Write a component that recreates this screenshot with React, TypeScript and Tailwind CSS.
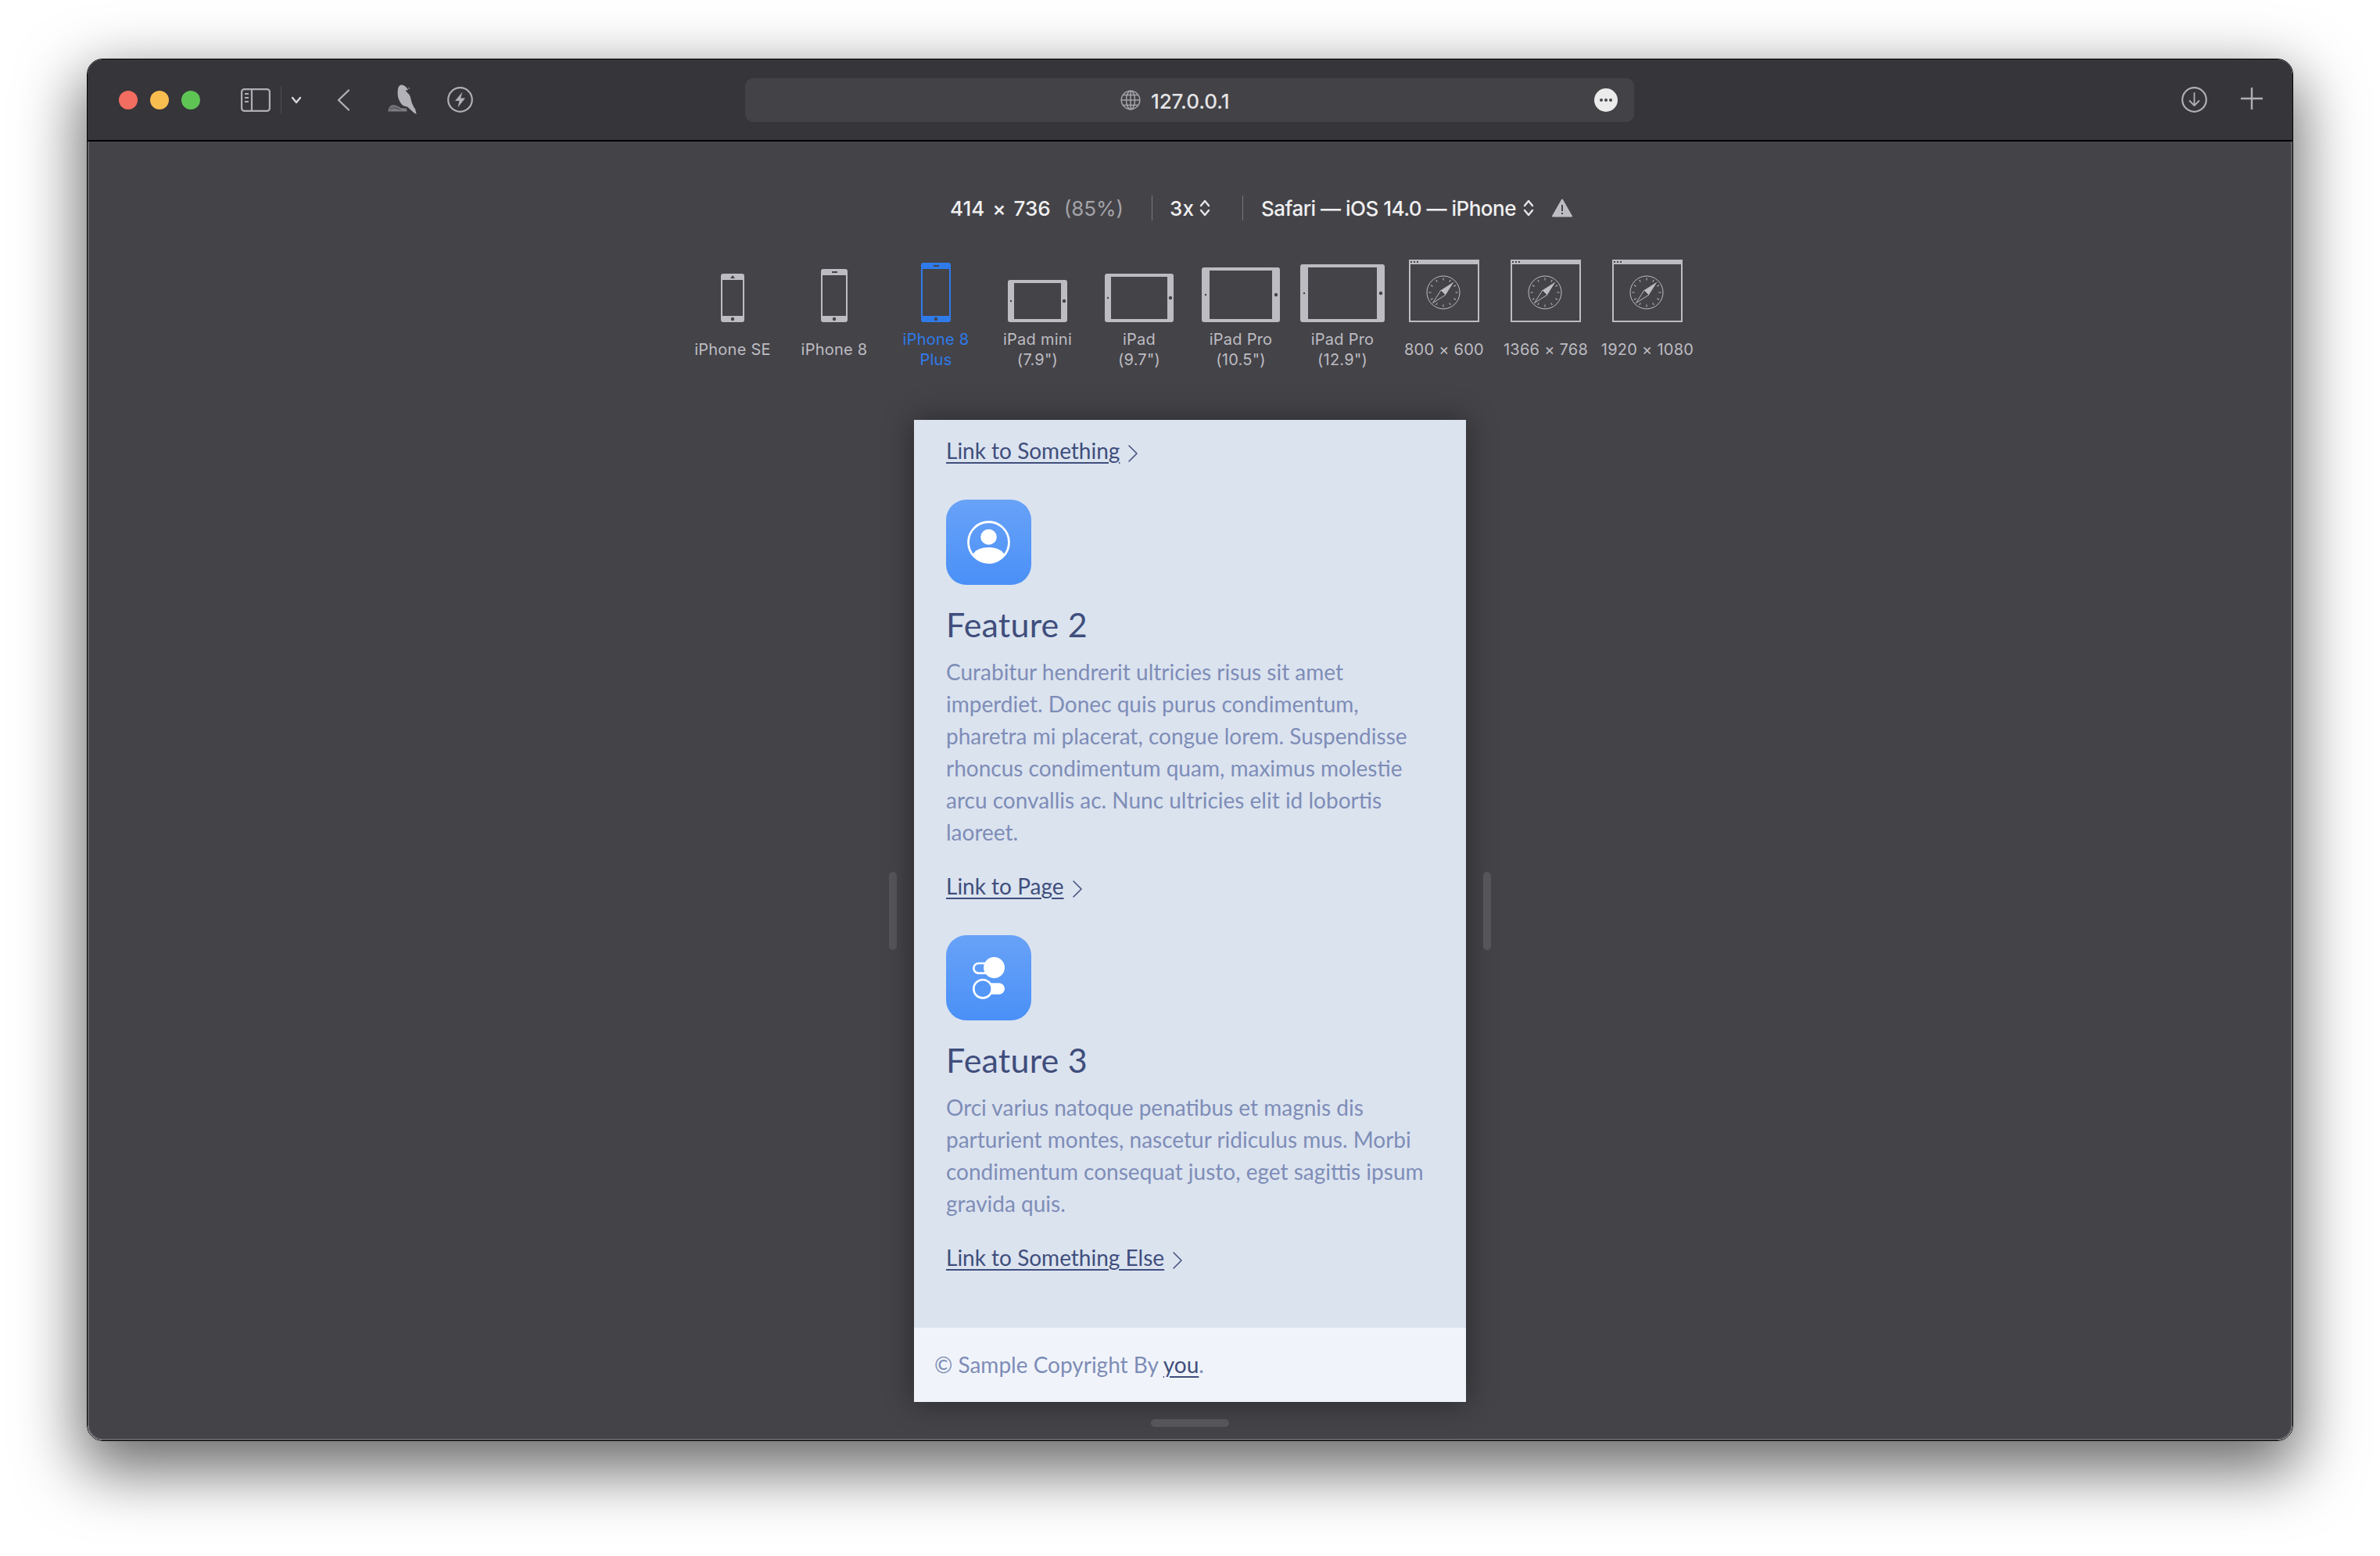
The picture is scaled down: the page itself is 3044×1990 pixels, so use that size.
import React from "react";

const BG = "#444348";
const GRAY = "#bdbcc2";

function Phone({ w, h, top, bottom, side, color, speaker }: { w: number; h: number; top: number; bottom: number; side: number; color: string; speaker: "cone" | "bar" }) {
  return (
    <svg width={w} height={h} viewBox={`0 0 ${w} ${h}`}>
      <rect width={w} height={h} rx="3" fill={color} />
      <rect x={side} y={top} width={w - side * 2} height={h - top - bottom} fill={BG} />
      <circle cx={w / 2} cy={h - bottom / 2} r="2.2" fill={BG} />
      {speaker === "cone" ? (
        <path d={`M${w / 2 - 3} ${top - 2}h6l-3 -4z`} fill={BG} />
      ) : (
        <rect x={w / 2 - 3} y={top / 2 - 1} width="7" height="2" fill={BG} />
      )}
    </svg>
  );
}

function Tablet({ w, h, top, side, camY }: { w: number; h: number; top: number; side: number; camY: number }) {
  return (
    <svg width={w} height={h} viewBox={`0 0 ${w} ${h}`}>
      <rect width={w} height={h} rx="3" fill={GRAY} />
      <rect x={side} y={top} width={w - side * 2} height={h - top * 2} fill={BG} />
      <circle cx={side / 2} cy={camY} r="1.2" fill={BG} />
      <circle cx={w - side / 2} cy={camY} r="2.2" fill={BG} />
    </svg>
  );
}

function Browser() {
  const ticks = [0, 30, 60, 90, 120, 150, 180, 210, 240, 270, 300, 330];
  return (
    <svg width="90" height="80" viewBox="0 0 90 80">
      <rect x="1" y="1" width="88" height="78" fill="none" stroke={GRAY} strokeWidth="2" />
      <rect width="90" height="6" fill={GRAY} />
      <rect x="2" y="2" width="2" height="2" fill={BG} />
      <rect x="6" y="2" width="2" height="2" fill={BG} />
      <rect x="10" y="2" width="2" height="2" fill={BG} />
      <g transform="translate(44 42)">
        <circle r="21" fill="none" stroke={GRAY} strokeWidth="1" />
        {ticks.map((a) => (
          <line key={a} x1="0" y1="-18.5" x2="0" y2="-15.5" stroke={GRAY} strokeWidth="1" transform={`rotate(${a})`} />
        ))}
        <path d="M13.5 -13.5L3 3L-3 -3Z" fill={GRAY} />
        <path d="M-13.5 13.5L3 3L-3 -3Z" fill="none" stroke={GRAY} strokeWidth="1" />
      </g>
    </svg>
  );
}

function Updown() {
  return (
    <svg width="16" height="24" viewBox="0 0 16 24" fill="none" stroke="#e6e6e8" strokeWidth="2.4" strokeLinecap="round" strokeLinejoin="round">
      <path d="M3 9l5-6 5 6" />
      <path d="M3 15l5 6 5-6" />
    </svg>
  );
}

function Chevron() {
  return (
    <svg width="14" height="24" viewBox="0 0 14 24" fill="none" stroke="#46547f" strokeWidth="1.6" strokeLinecap="round" strokeLinejoin="round" className="ml-[10px] mt-[4px]">
      <path d="M2 2l10 10L2 22" />
    </svg>
  );
}

function FLink({ children }: { children: React.ReactNode }) {
  return (
    <div className="flex items-center h-[41px] text-[#3f4e7c]">
      <span className="underline underline-offset-[4px] decoration-[2px] mb-[3px]">{children}</span>
      <Chevron />
    </div>
  );
}

function Tile({ children }: { children: React.ReactNode }) {
  return (
    <div className="w-[109px] h-[109px] mt-[41px] rounded-[26px] bg-gradient-to-b from-[#68a2f8] to-[#4a90f7] flex items-center justify-center">
      {children}
    </div>
  );
}

const devices: { label: React.ReactNode; icon: React.ReactNode; active?: boolean }[] = [
  { label: "iPhone SE", icon: <Phone w={30} h={62} top={8} bottom={8} side={2} color={GRAY} speaker="cone" /> },
  { label: "iPhone 8", icon: <Phone w={34} h={68} top={8} bottom={8} side={2} color={GRAY} speaker="bar" /> },
  { label: <>iPhone 8<br />Plus</>, active: true, icon: <Phone w={38} h={76} top={8} bottom={8} side={2} color="#2f7bea" speaker="bar" /> },
  { label: <>iPad mini<br />(7.9")</>, icon: <Tablet w={76} h={54} top={4} side={8} camY={27} /> },
  { label: <>iPad<br />(9.7")</>, icon: <Tablet w={88} h={62} top={4} side={8} camY={31} /> },
  { label: <>iPad Pro<br />(10.5")</>, icon: <Tablet w={100} h={70} top={4} side={10} camY={35} /> },
  { label: <>iPad Pro<br />(12.9")</>, icon: <Tablet w={108} h={74} top={4} side={10} camY={37} /> },
  { label: "800 × 600", icon: <Browser /> },
  { label: "1366 × 768", icon: <Browser /> },
  { label: "1920 × 1080", icon: <Browser /> },
];

export default function App() {
  return (
    <div className="w-[3044px] h-[1990px] bg-white pt-[75px] pl-[111px] font-['Inter',sans-serif]">
      <div className="w-[2822px] h-[1768px] rounded-[20px] border border-black shadow-[0_30px_80px_8px_rgba(0,0,0,0.58)] overflow-hidden flex flex-col">
        {/* toolbar */}
        <div className="h-[105px] shrink-0 bg-[#36353a] border-b-2 border-black flex items-center pl-[40px]">
          <div className="flex gap-[16px]">
            <div className="w-[24px] h-[24px] rounded-full bg-[#f36d60]" />
            <div className="w-[24px] h-[24px] rounded-full bg-[#f8bd4f]" />
            <div className="w-[24px] h-[24px] rounded-full bg-[#5ec454]" />
          </div>
          <svg width="38" height="30" viewBox="0 0 38 30" fill="none" stroke="#b0afb5" strokeWidth="2.2" className="ml-[52px]">
            <rect x="1.1" y="1.1" width="35.8" height="27.8" rx="3.5" />
            <path d="M14 1v28" />
            <path d="M5 7h5M5 12h5M5 17h5" strokeWidth="1.8" />
          </svg>
          <div className="w-[1px] h-[36px] bg-[#4d4c52] ml-[13px]" />
          <svg width="14" height="10" viewBox="0 0 14 10" fill="none" stroke="#d8d8da" strokeWidth="2.4" strokeLinecap="round" strokeLinejoin="round" className="ml-[12px]">
            <path d="M2 2l5 6 5-6" />
          </svg>
          <svg width="16" height="28" viewBox="0 0 16 28" fill="none" stroke="#b0afb5" strokeWidth="2.4" strokeLinecap="round" strokeLinejoin="round" className="ml-[45px]">
            <path d="M15 1.5L2 14l13 12.5" />
          </svg>
          <svg width="40" height="40" viewBox="46 40 122 122" className="ml-[48px]">
            <path d="M50 144C52 128 62 118 74 120C84 122 92 127 100 132L122 134L124 145H50Z" fill="#7f7e84" />
            <path d="M56 134C66 125 78 126 92 134M56 140C68 131 84 132 100 140" stroke="#36353a" strokeWidth="2" fill="none" />
            <path d="M100 42C92 44 88 54 88 66C85 84 92 108 108 122L126 128L150 150L161 157L156 136C142 118 141 102 136 86C133 76 122 72 119 62L129 62L121 51C113 45 107 41 100 42Z" fill="#b3b2b8" />
            <path d="M130 52l3 6" stroke="#b3b2b8" strokeWidth="3" />
          </svg>
          <svg width="33" height="33" viewBox="0 0 33 33" className="ml-[37px]">
            <circle cx="16.5" cy="16.5" r="15.3" fill="none" stroke="#b0afb5" strokeWidth="2.2" />
            <path d="M19.5 6.5L10 18h5.5l-2 8.5L23 14.5h-5.8z" fill="#b0afb5" />
          </svg>
          <div className="w-[1137px] h-[56px] ml-[348px] rounded-[10px] bg-[#434247] flex items-center pl-[480px] pr-[21px]">
            <svg width="26" height="26" viewBox="0 0 26 26" fill="none" stroke="#a4a3a9" strokeWidth="1.5">
              <circle cx="13" cy="13" r="11.8" />
              <ellipse cx="13" cy="13" rx="5.5" ry="11.8" />
              <path d="M13 1v24M1.2 13h23.6M3.2 6.5h19.6M3.2 19.5h19.6" />
            </svg>
            <span className="ml-[13px] text-[26px] font-medium text-[#e4e4e6] mt-[3px] tracking-[-0.1px]">127.0.0.1</span>
            <div className="ml-auto w-[30px] h-[30px] rounded-full bg-[#ebebec] flex items-center justify-center gap-[2px]">
              <div className="w-[4px] h-[4px] rounded-full bg-[#47464b]" />
              <div className="w-[4px] h-[4px] rounded-full bg-[#47464b]" />
              <div className="w-[4px] h-[4px] rounded-full bg-[#47464b]" />
            </div>
          </div>
          <svg width="33" height="33" viewBox="0 0 33 33" fill="none" stroke="#b0afb5" strokeWidth="2.2" strokeLinecap="round" strokeLinejoin="round" className="ml-[700px]">
            <circle cx="16.5" cy="16.5" r="15.3" />
            <path d="M16.5 8v16M10.5 18l6 6 6-6" strokeWidth="1.8" />
          </svg>
          <svg width="28" height="28" viewBox="0 0 28 28" stroke="#b0afb5" className="ml-[43px] mb-[4px]">
            <path d="M14 0v28M0 14h28" strokeWidth="2.4" />
          </svg>
        </div>
        {/* content */}
        <div className="flex-1 bg-[#444348] border-x-2 border-b-2 border-[#616165] rounded-b-[20px] flex flex-col">
          <div className="h-[40px] mt-[65px] pl-[1101px] flex items-center text-[26px] font-medium text-[#f0f0f1] whitespace-nowrap">
            <span>414</span>
            <span className="ml-[10px]">×</span>
            <span className="ml-[10px]">736</span>
            <span className="ml-[17px] font-normal text-[#a4a3a8]">(85%)</span>
            <div className="w-[1px] h-[32px] bg-[#77767b] ml-[36px]" />
            <span className="ml-[22px]">3x</span>
            <div className="ml-[6px]"><Updown /></div>
            <div className="w-[1px] h-[32px] bg-[#77767b] ml-[40px]" />
            <span className="ml-[23px] tracking-[-0.5px]">Safari — iOS 14.0 — iPhone</span>
            <div className="ml-[8px]"><Updown /></div>
            <svg width="26" height="24" viewBox="0 0 26 24" className="ml-[22px]">
              <path d="M13 1.5L25 22.5H1Z" fill="#bdbcc2" stroke="#bdbcc2" strokeWidth="2" strokeLinejoin="round" />
              <rect x="12" y="8" width="2" height="8" fill={BG} />
              <rect x="12" y="18" width="2" height="2" fill={BG} />
            </svg>
          </div>
          <div className="w-[1300px] mx-auto mt-[44px] flex">
            {devices.map((d, i) => (
              <div key={i} className="w-[130px] flex flex-col items-center">
                <div className="h-[82px] flex items-end">{d.icon}</div>
                <div className={`h-[50px] mt-[10px] flex items-center text-center text-[20px] leading-[26px] tracking-[0.25px] whitespace-nowrap ${d.active ? "text-[#2f7bea]" : "text-[#bdbcc2]"}`}>
                  <div>{d.label}</div>
                </div>
              </div>
            ))}
          </div>
          <div className="mt-[65px] flex items-center justify-center">
            <div className="w-[10px] h-[100px] rounded-full bg-[#55555a]" />
            <div className="w-[706px] h-[1256px] mx-[22px] flex flex-col shadow-[0_0_36px_rgba(0,0,0,0.4)] font-['Lato',sans-serif] text-[28px] leading-[41px]">
              <div className="h-[1161px] bg-[#dbe3ef] pl-[41px] pt-[20px]">
                <FLink>Link to Something</FLink>
                <Tile>
                  <svg width="55" height="55" viewBox="0 0 55 55" fill="none">
                    <circle cx="27.5" cy="27.5" r="26" stroke="white" strokeWidth="2.8" />
                    <ellipse cx="27.5" cy="20.7" rx="10.3" ry="10" fill="white" />
                    <path d="M7.5 43C10 37 19 34 27.5 34C36 34 45 37 47.5 43C43 50 35.5 54 27.5 54C19.5 54 12 50 7.5 43Z" fill="white" />
                  </svg>
                </Tile>
                <h2 className="mt-[26px] text-[43px] leading-[50px] tracking-[0.2px] text-[#3f4e7c]">Feature 2</h2>
                <p className="mt-[15px] text-[#7e8db7]">
                  Curabitur hendrerit ultricies risus sit amet<br />
                  imperdiet. Donec quis purus condimentum,<br />
                  pharetra mi placerat, congue lorem. Suspendisse<br />
                  rhoncus condimentum quam, maximus molestie<br />
                  arcu convallis ac. Nunc ultricies elit id lobortis<br />
                  laoreet.
                </p>
                <div className="mt-[29px]"><FLink>Link to Page</FLink></div>
                <Tile>
                  <svg width="41" height="54" viewBox="0 0 41 54" fill="none">
                    <rect x="1.3" y="8" width="30" height="12.6" rx="6.3" stroke="white" strokeWidth="2.6" />
                    <circle cx="27.5" cy="13.5" r="13.5" fill="white" />
                    <rect x="13" y="33.3" width="28" height="14.4" rx="7.2" fill="white" />
                    <circle cx="13" cy="40.7" r="11.7" fill="#5597f7" stroke="white" strokeWidth="2.6" />
                  </svg>
                </Tile>
                <h2 className="mt-[26px] text-[43px] leading-[50px] tracking-[0.2px] text-[#3f4e7c]">Feature 3</h2>
                <p className="mt-[15px] text-[#7e8db7]">
                  Orci varius natoque penatibus et magnis dis<br />
                  parturient montes, nascetur ridiculus mus. Morbi<br />
                  condimentum consequat justo, eget sagittis ipsum<br />
                  gravida quis.
                </p>
                <div className="mt-[29px]"><FLink>Link to Something Else</FLink></div>
              </div>
              <div className="h-[95px] bg-[#f0f4fa] pl-[26px] flex items-center text-[#7e8db7]">
                <span>© Sample Copyright By <span className="text-[#3f4e7c] underline underline-offset-[4px] decoration-[2px]">you</span>.</span>
              </div>
            </div>
            <div className="w-[10px] h-[100px] rounded-full bg-[#55555a]" />
          </div>
          <div className="w-[100px] h-[10px] rounded-full bg-[#55555a] mx-auto mt-[22px]" />
        </div>
      </div>
    </div>
  );
}
